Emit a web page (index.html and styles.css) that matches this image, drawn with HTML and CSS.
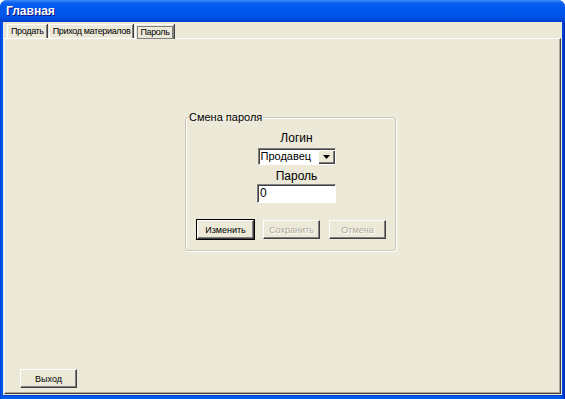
FILE: index.html
```html
<!DOCTYPE html>
<html lang="ru">
<head>
    <meta charset="UTF-8">
    <title>Главная</title>
    <link rel="stylesheet" href="styles.css">
</head>
<body>
    <div class="window">
        <div class="titlebar">Главная</div>
        <div class="client">
            <div class="tabs">
                <div class="tab">Продать</div>
                <div class="tab">Приход материалов</div>
                <div class="tab active"><span class="focus">Пароль</span></div>
            </div>
            <div class="panel">
                <fieldset class="group">
                    <legend>Смена пароля</legend>
                    <div class="label">Логин</div>
                    <div class="combo">
                        <span class="combo-text">Продавец</span>
                        <span class="combo-btn">
                            <svg width="7" height="4" viewBox="0 0 7 4"><path d="M0 0h7L3.5 4z" fill="#000"/></svg>
                        </span>
                    </div>
                    <div class="label">Пароль</div>
                    <div class="edit">0</div>
                    <div class="buttons">
                        <button class="btn default">Изменить</button>
                        <button class="btn" disabled>Сохранить</button>
                        <button class="btn" disabled>Отмена</button>
                    </div>
                </fieldset>
                <button class="btn exit">Выход</button>
            </div>
        </div>
    </div>
</body>
</html>
```

FILE: styles.css
```css
body {
    margin: 0;
    font-family: "Liberation Sans", Arial, sans-serif;
}
.window {
    width: 565px;
    height: 399px;
    box-sizing: border-box;
    display: flex;
    flex-direction: column;
    background: linear-gradient(90deg, #0831D9 0, #0055EA 1px, #0058EE 3px, #0058EE 561px, #0041D9 563px, #001EA0 565px);
    border-radius: 7px 7px 0 0;
    overflow: hidden;
}
.titlebar {
    height: 22px;
    line-height: 22px;
    padding-left: 6px;
    color: #fff;
    font-weight: bold;
    font-size: 12px;
    text-shadow: 1px 1px #0F1089;
    background: linear-gradient(#3C8DF8 0, #0A5FEF 3px, #0058EE 8px, #0055E8 16px, #0046D6 20px, #0040CF 22px);
}
.client {
    flex: 1;
    margin: 0 3px 3px 3px;
    background: #ECE9D8;
    display: flex;
    flex-direction: column;
    padding: 2px 1px 1px 1px;
    border-bottom: 1px solid #003CC6;
}
.tabs {
    display: flex;
    padding-left: 3px;
    height: 14px;
    align-items: flex-end;
}
.tab {
    font-size: 9px;
    letter-spacing: -0.35px;
    line-height: 13px;
    height: 13px;
    padding: 0 3px;
    margin-right: 2px;
    border-left: 1px solid #fff;
    border-top: 1px solid #fff;
    box-shadow: 1px 0 #404040, inset -1px 0 #808080;
    color: #000;
}
.tab.active {
    height: 14px;
    padding: 0 1px;
    margin-bottom: -1px;
    position: relative;
    z-index: 1;
    background: #ECE9D8;
}
.focus {
    display: block;
    height: 11px;
    line-height: 11px;
    padding: 0 2px;
    margin-top: 1px;
    border: 1px solid #808080;
}
.panel {
    flex: 1;
    display: flex;
    flex-direction: column;
    align-items: flex-start;
    border-top: 1px solid #fff;
    border-left: 1px solid #fff;
    border-right: 1px solid #404040;
    border-bottom: 1px solid #404040;
    box-shadow: inset -1px -1px #ACA899;
    padding: 0 0 5px 15px;
}
.group {
    margin: 72px 0 0 165px;
    width: 211px;
    height: 140px;
    box-sizing: border-box;
    border: 1px solid #C9C6B6;
    border-radius: 3px;
    box-shadow: inset 1px 1px #fff, 1px 1px #fff;
    padding: 8px 0 0 0;
    display: flex;
    flex-direction: column;
    align-items: center;
}
.group legend {
    font-size: 11px;
    padding: 0 1px;
    margin-left: 2px;
    color: #000;
}
.label {
    font-size: 12px;
    line-height: 14px;
    padding-left: 12px;
}
.combo {
    margin: 3px 0 4px 12px;
    width: 78px;
    height: 17px;
    box-sizing: border-box;
    background: #fff;
    border-top: 1px solid #808080;
    border-left: 1px solid #808080;
    border-right: 1px solid #fff;
    border-bottom: 1px solid #fff;
    box-shadow: inset 1px 1px #404040;
    display: flex;
    justify-content: space-between;
}
.combo-text {
    font-size: 11px;
    line-height: 15px;
    padding-left: 2px;
}
.combo-btn {
    width: 16px;
    height: 13px;
    margin: 1px 1px 0 0;
    background: #ECE9D8;
    box-sizing: border-box;
    border-top: 1px solid #fff;
    border-left: 1px solid #fff;
    box-shadow: inset -1px -1px #808080, 1px 1px #404040;
    display: flex;
    align-items: center;
    justify-content: center;
}
.edit {
    margin: 1px 0 0 12px;
    width: 79px;
    height: 19px;
    box-sizing: border-box;
    background: #fff;
    border-top: 1px solid #808080;
    border-left: 1px solid #808080;
    border-right: 1px solid #fff;
    border-bottom: 1px solid #fff;
    box-shadow: inset 1px 1px #404040;
    font-size: 12px;
    line-height: 17px;
    padding-left: 2px;
}
.buttons {
    display: flex;
    gap: 9px;
    margin-top: 17px;
    padding-left: 2px;
}
.btn {
    font-family: "Liberation Sans", Arial, sans-serif;
    font-size: 9px;
    width: 57px;
    height: 19px;
    padding: 0;
    background: #ECE9D8;
    color: #000;
    border-top: 1px solid #fff;
    border-left: 1px solid #fff;
    border-right: 1px solid #404040;
    border-bottom: 1px solid #404040;
    box-shadow: inset -1px -1px #808080;
}
.btn.default {
    outline: 1px solid #000;
}
.btn:disabled {
    color: #ACA899;
    text-shadow: 1px 1px #fff;
}
.exit {
    margin-top: auto;
}
```
